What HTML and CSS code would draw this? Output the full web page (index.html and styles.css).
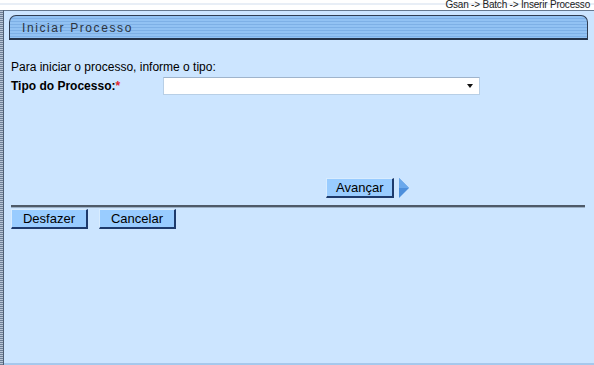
FILE: index.html
```html
<!DOCTYPE html>
<html lang="pt-BR">

<head>
    <meta charset="UTF-8">
    <title>Iniciar Processo</title>
    <link rel="stylesheet" href="styles.css">
</head>

<body>
    <div class="crumb">Gsan -&gt; Batch -&gt; Inserir Processo</div>
    <div class="frame">
        <div class="edge"></div>
        <div class="panel">
            <div class="tab">Iniciar Processo</div>

            <p class="intro">Para iniciar o processo, informe o tipo:</p>
            <div class="field">
                <label class="label">Tipo do Processo:<span class="req">*</span></label>
                <div class="select">
                    <span class="caret"></span>
                </div>
            </div>

            <div class="next">
                <button class="btn">Avançar</button>
                <svg class="arrow" width="12" height="20" viewBox="0 0 12 20">
                    <path d="M1 0 L11 10 L1 20 Z" fill="#4d8fdc" />
                    <path d="M1 0 L11 10 L1 10 Z" fill="#6aa8ec" />
                </svg>
            </div>

            <div class="rule"></div>

            <div class="actions">
                <button class="btn">Desfazer</button>
                <button class="btn">Cancelar</button>
            </div>
        </div>
    </div>
</body>

</html>
```

FILE: styles.css
```css
html,
body {
    margin: 0;
    height: 100%;
    background: #fff;
    font-family: "Liberation Sans", Arial, sans-serif;
    color: #000;
}

/* caminho no topo */

.crumb {
    height: 10px;
    padding-right: 4px;
    font-size: 10px;
    line-height: 9px;
    letter-spacing: -0.2px;
    text-align: right;
    color: #222;
    background: linear-gradient(#fff 0 3px, #e8eef6 3px 5px, #fff 5px);
}

.frame {
    display: flex;
    height: 355px;
}

.edge {
    width: 3px;
    background: repeating-linear-gradient(#6f8199 0 1px, #b9c6d6 1px 2px);
    border-right: 1px solid #4f5f74;
}

/* painel principal */

.panel {
    flex: 1;
    background: #cce5ff;
    border-top: 1px solid #65788f;
    border-bottom: 2px solid #a6c8ec;
    padding: 4px 9px 0 7px;
    font-size: 12px;
}

.tab {
    height: 22px;
    margin-left: -2px;
    margin-right: -3px;
    padding-left: 12px;
    font-size: 12px;
    line-height: 24px;
    letter-spacing: 1.6px;
    color: #2c3440;
    background: repeating-linear-gradient(#92c2f3 0 2px, #7eb0e6 2px 3px);
    border: 1px solid #2f3d52;
    border-bottom: 2px solid #24334a;
    border-radius: 7px 7px 0 0;
}

.intro {
    margin: 19px 0 0 0;
    line-height: 16px;
}

.field {
    display: flex;
    align-items: center;
    margin-top: 2px;
}

.label {
    width: 152px;
    font-weight: bold;
}

.req {
    color: #e0242c;
}

.select {
    position: relative;
    width: 315px;
    height: 16px;
    background: #fff;
    border: 1px solid #b8cfe6;
    border-top-color: #9fb4cc;
}

.caret {
    position: absolute;
    right: 6px;
    top: 6px;
    border-left: 3px solid transparent;
    border-right: 3px solid transparent;
    border-top: 4px solid #111;
}

/* botões */

.btn {
    height: 20px;
    padding: 0 9px;
    font-family: "Liberation Sans", Arial, sans-serif;
    font-size: 13px;
    line-height: 17px;
    color: #000;
    background: #99ccff;
    border: 1px solid;
    border-color: #d8ecff #1d3a6c #1d3a6c #d8ecff;
    border-width: 1px 2px 2px 1px;
}

.next {
    display: flex;
    align-items: center;
    gap: 4px;
    margin: 83px 0 0 315px;
}

.arrow {
    display: block;
}

.rule {
    height: 2px;
    margin-top: 7px;
    background: #4e5a68;
    border-bottom: 1px solid #9bb0c6;
}

.actions {
    display: flex;
    gap: 11px;
    margin-top: 1px;
}

.actions .btn {
    width: 77px;
}
```
